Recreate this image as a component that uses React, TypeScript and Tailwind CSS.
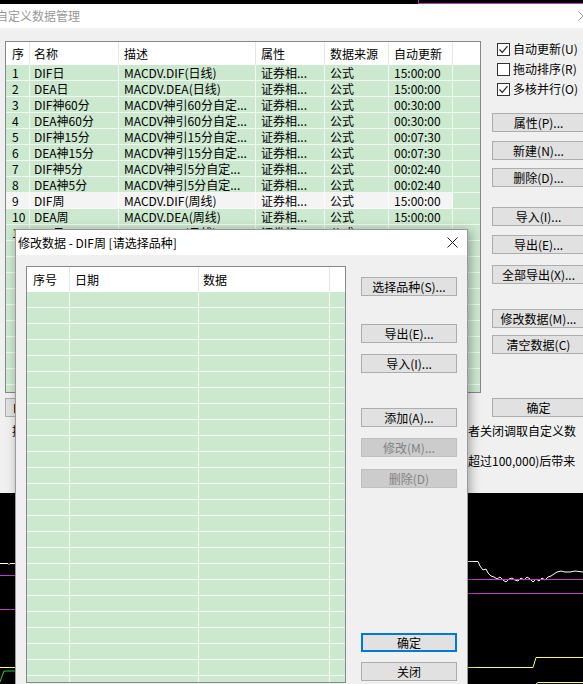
import React from 'react'

type Row = { no: string; name: string; desc: string; attr: string; src: string; time: string }

const rows: Row[] = [
  { no: '1', name: 'DIF日', desc: 'MACDV.DIF(日线)', attr: '证券相...', src: '公式', time: '15:00:00' },
  { no: '2', name: 'DEA日', desc: 'MACDV.DEA(日线)', attr: '证券相...', src: '公式', time: '15:00:00' },
  { no: '3', name: 'DIF神60分', desc: 'MACDV神引60分自定...', attr: '证券相...', src: '公式', time: '00:30:00' },
  { no: '4', name: 'DEA神60分', desc: 'MACDV神引60分自定...', attr: '证券相...', src: '公式', time: '00:30:00' },
  { no: '5', name: 'DIF神15分', desc: 'MACDV神引15分自定...', attr: '证券相...', src: '公式', time: '00:07:30' },
  { no: '6', name: 'DEA神15分', desc: 'MACDV神引15分自定...', attr: '证券相...', src: '公式', time: '00:07:30' },
  { no: '7', name: 'DIF神5分', desc: 'MACDV神引5分自定...', attr: '证券相...', src: '公式', time: '00:02:40' },
  { no: '8', name: 'DEA神5分', desc: 'MACDV神引5分自定...', attr: '证券相...', src: '公式', time: '00:02:40' },
  { no: '9', name: 'DIF周', desc: 'MACDV.DIF(周线)', attr: '证券相...', src: '公式', time: '15:00:00' },
  { no: '10', name: 'DEA周', desc: 'MACDV.DEA(周线)', attr: '证券相...', src: '公式', time: '15:00:00' },
  { no: '11', name: 'DIF月', desc: 'MACDV.DIF(月线)', attr: '证券相...', src: '公式', time: '15:00:00' },
]

const emptyRows = Array.from({ length: 10 })
const modalRows = Array.from({ length: 25 })

function WinButton({
  label,
  disabled = false,
  primary = false,
  className = '',
}: {
  label: string
  disabled?: boolean
  primary?: boolean
  className?: string
}) {
  const look = disabled
    ? 'bg-[#cccccc] border border-[#bfbfbf] text-[#838383]'
    : primary
      ? 'bg-[#e1e1e1] border-2 border-[#0078d7] text-black'
      : 'bg-[#e1e1e1] border border-[#adadad] text-black'
  return (
    <button
      type="button"
      className={`h-[19px] flex items-center justify-center whitespace-nowrap text-[12px] leading-[16px] ${look} ${className}`}
    >
      {label}
    </button>
  )
}

function Check({ label, checked }: { label: string; checked: boolean }) {
  return (
    <div className="flex h-[16px] items-center gap-[3px]">
      <span className="w-[13px] h-[13px] border border-[#333333] bg-white flex items-center justify-center">
        {checked && (
          <svg width="11" height="11" viewBox="0 0 11 11">
            <path d="M1.5 5.5 L4.3 8.3 L9.5 2.2" fill="none" stroke="#222" strokeWidth="1.2" />
          </svg>
        )}
      </span>
      <span className="whitespace-nowrap">{label}</span>
    </div>
  )
}

export default function App() {
  return (
    <div className="relative w-[583px] h-[684px] overflow-hidden bg-black font-['Noto_Sans_CJK_SC',sans-serif] text-[12px] leading-[16px] text-black">
      {/* strip of the chart window above */}
      <svg width="583" height="4" className="block">
        <polyline points="418.5,0 418.5,3.5 583,3.5" fill="none" stroke="#b03cb0" strokeWidth="1" />
      </svg>

      {/* 自定义数据管理 (inactive) */}
      <div className="w-[614px] -ml-[8px] h-[489px] bg-[#f0f0f0] flex flex-col">
        <div className="h-[24px] bg-white flex items-center justify-between">
          <span className="pl-[4px] text-[#999999] text-[12px] whitespace-nowrap">自定义数据管理</span>
          <span className="w-[46px] flex justify-center">
            <svg width="10" height="10" viewBox="0 0 10 10">
              <path d="M0.5 0.5 L9.5 9.5 M9.5 0.5 L0.5 9.5" stroke="#999" strokeWidth="1" />
            </svg>
          </span>
        </div>

        <div className="pl-[13px] pt-[13px] flex">
          {/* left column */}
          <div className="flex flex-col">
            <div className="w-[476px] h-[352px] border border-[#828790] bg-[#cce8cf] overflow-hidden flex flex-col">
              <div className="h-[23px] shrink-0 bg-white flex">
                <div className="w-[24px] pl-[6px] flex items-center border-r border-[#e5e5e5]">序</div>
                <div className="w-[89px] pl-[4px] flex items-center border-r border-[#e5e5e5]">名称</div>
                <div className="w-[137px] pl-[5px] flex items-center border-r border-[#e5e5e5]">描述</div>
                <div className="w-[69px] pl-[5px] flex items-center border-r border-[#e5e5e5]">属性</div>
                <div className="w-[64px] pl-[5px] flex items-center border-r border-[#e5e5e5]">数据来源</div>
                <div className="w-[64px] pl-[5px] flex items-center border-r border-[#e5e5e5]">自动更新</div>
                <div className="flex-1" />
              </div>
              {rows.map((r) => {
                const sel = r.no === '9'
                const cell = `h-[16px] flex items-center whitespace-nowrap overflow-hidden border-r border-b border-white/70 ${sel ? 'bg-[#f4f4f4]' : ''}`
                return (
                  <div key={r.no} className="flex shrink-0">
                    <div className={`w-[24px] pl-[6px] ${cell}`}>{r.no}</div>
                    <div className={`w-[89px] pl-[4px] ${cell}`}>{r.name}</div>
                    <div className={`w-[137px] pl-[5px] ${cell}`}>{r.desc}</div>
                    <div className={`w-[69px] pl-[5px] ${cell}`}>{r.attr}</div>
                    <div className={`w-[64px] pl-[5px] ${cell}`}>{r.src}</div>
                    <div className={`w-[64px] pl-[5px] ${cell}`}>{r.time}</div>
                    <div className="flex-1 h-[16px] border-b border-white/70" />
                  </div>
                )
              })}
              {emptyRows.map((_, i) => (
                <div key={i} className="flex shrink-0">
                  <div className="w-[24px] h-[16px] border-r border-b border-white/70" />
                  <div className="w-[89px] h-[16px] border-r border-b border-white/70" />
                  <div className="w-[137px] h-[16px] border-r border-b border-white/70" />
                  <div className="w-[69px] h-[16px] border-r border-b border-white/70" />
                  <div className="w-[64px] h-[16px] border-r border-b border-white/70" />
                  <div className="w-[64px] h-[16px] border-r border-b border-white/70" />
                  <div className="flex-1 h-[16px] border-b border-white/70" />
                </div>
              ))}
            </div>
            <WinButton label="Excel..." className="mt-[5px] w-[80px] !justify-start pl-[7px]" />
          </div>

          {/* right column */}
          <div className="ml-[11px] flex flex-col">
            <div className="pl-[5px] flex flex-col gap-[4px]">
              <Check label="自动更新(U)" checked />
              <Check label="拖动排序(R)" checked={false} />
              <Check label="多核并行(O)" checked />
            </div>
            <WinButton label="属性(P)..." className="mt-[16px] w-[93px]" />
            <WinButton label="新建(N)..." className="mt-[9px] w-[93px]" />
            <WinButton label="删除(D)..." className="mt-[8px] w-[93px]" />
            <WinButton label="导入(I)..." className="mt-[20px] w-[93px]" />
            <WinButton label="导出(E)..." className="mt-[9px] w-[93px]" />
            <WinButton label="全部导出(X)..." className="mt-[11px] w-[93px]" />
            <WinButton label="修改数据(M)..." className="mt-[25px] w-[93px]" />
            <WinButton label="清空数据(C)" className="mt-[7px] w-[93px]" />
            <WinButton label="确定" className="mt-[44px] w-[93px]" />
          </div>
        </div>

        <div className="mt-[6px] pl-[20px] whitespace-nowrap">
          提示：自定义数据修改后，需要重新打开分析界面才能生效，请保存全部数据再刷新或者关闭调取自定义数
        </div>
        <div className="mt-[14px] pl-[32px] whitespace-nowrap">
          注意：修改或者导入大量的历史数据时（例如某单个品种的日线行情数据记录总条数超过100,000)后带来
        </div>
      </div>

      {/* chart area */}
      <svg width="583" height="191" className="block">
        <polyline points="0,70.5 8,70.5 9,71.5 10,70.5 15,70.5" fill="none" stroke="#ffffff" strokeWidth="1" />
        <line x1="0" y1="82.5" x2="15" y2="82.5" stroke="#c040c0" strokeWidth="1" />
        <line x1="0" y1="116.5" x2="15" y2="116.5" stroke="#c040c0" strokeWidth="1" />
        <line x1="0" y1="174.5" x2="15" y2="174.5" stroke="#ffff66" strokeWidth="1" />
        <polyline points="0,189 4,178 15,178" fill="none" stroke="#33cc33" strokeWidth="1" />

        <polyline
          points="467,68.5 478,68.5 480,73 483,77 486,76 488,80 491,83 494,84 497,86 500,84 503,87 506,89 509,86 512,85 515,87 518,88 521,85 524,87 527,84 530,86 533,89 536,86 539,88 542,85 545,87 548,84 551,83 554,81 557,79 561,78 565,79 570,79 575,78 583,79"
          fill="none"
          stroke="#ffffff"
          strokeWidth="1"
        />
        <line x1="467" y1="86.5" x2="583" y2="86.5" stroke="#c040c0" strokeWidth="1" />
        <line x1="467" y1="100.5" x2="583" y2="100.5" stroke="#c040c0" strokeWidth="1" />
        <polyline points="467,174.5 533,174.5 536,164.5 583,164.5" fill="none" stroke="#ffff66" strokeWidth="1" />
        <polyline points="536,191 538,189.5 583,189.5" fill="none" stroke="#ffff66" strokeWidth="1" />
      </svg>

      {/* 修改数据 modal */}
      <div className="absolute left-[15px] top-[229px] w-[453px] h-[470px] bg-[#f0f0f0] border border-[#9a9a9a] shadow-[2px_2px_10px_rgba(0,0,0,0.35)] flex flex-col">
        <div className="h-[25px] shrink-0 bg-white flex items-center justify-between">
          <span className="pl-[2px] whitespace-nowrap">修改数据 - DIF周 [请选择品种]</span>
          <span className="pr-[9px]">
            <svg width="11" height="11" viewBox="0 0 11 11">
              <path d="M0.5 0.5 L10.5 10.5 M10.5 0.5 L0.5 10.5" stroke="#222" strokeWidth="1" />
            </svg>
          </span>
        </div>

        <div className="pl-[10px] pt-[11px] flex">
          <div className="w-[320px] h-[417px] border border-[#828790] bg-[#cce8cf] overflow-hidden flex flex-col">
            <div className="h-[25px] shrink-0 bg-white flex">
              <div className="w-[43px] pl-[6px] flex items-center border-r border-[#e5e5e5]">序号</div>
              <div className="w-[129px] pl-[5px] flex items-center border-r border-[#e5e5e5]">日期</div>
              <div className="w-[131px] pl-[4px] flex items-center border-r border-[#e5e5e5]">数据</div>
              <div className="flex-1" />
            </div>
            {modalRows.map((_, i) => (
              <div key={i} className="flex shrink-0">
                <div className="w-[43px] h-[16px] border-r border-b border-white/80" />
                <div className="w-[129px] h-[16px] border-r border-b border-white/80" />
                <div className="w-[131px] h-[16px] border-r border-b border-white/80" />
                <div className="flex-1 h-[16px] border-b border-white/80" />
              </div>
            ))}
          </div>

          <div className="ml-[15px] pt-[11px] flex flex-col">
            <WinButton label="选择品种(S)..." className="w-[96px]" />
            <WinButton label="导出(E)..." className="mt-[28px] w-[96px]" />
            <WinButton label="导入(I)..." className="mt-[11px] w-[96px]" />
            <WinButton label="添加(A)..." className="mt-[35px] w-[96px]" />
            <WinButton label="修改(M)..." disabled className="mt-[11px] w-[96px]" />
            <WinButton label="删除(D)" disabled className="mt-[12px] w-[96px]" />
            <WinButton label="确定" primary className="mt-[145px] w-[96px]" />
            <WinButton label="关闭" className="mt-[10px] w-[96px]" />
          </div>
        </div>
      </div>
    </div>
  )
}
